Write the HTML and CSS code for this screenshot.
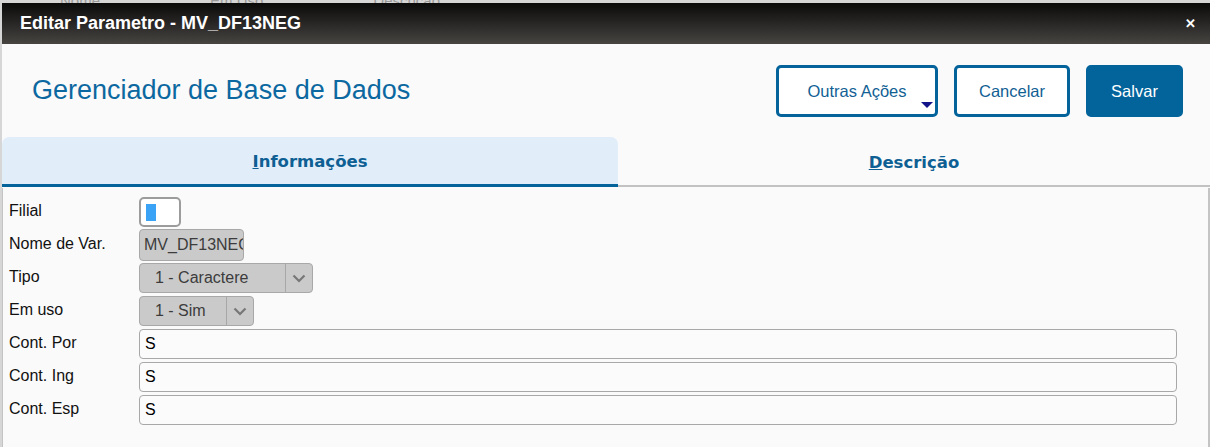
FILE: index.html
```html
<!DOCTYPE html>
<html lang="pt-BR">
<head>
  <meta charset="UTF-8" />
  <meta name="viewport" content="width=device-width, initial-scale=1" />
  <title>Editar Parametro - MV_DF13NEG</title>
  <link rel="stylesheet" href="styles.css">
</head>
<body>
  <div class="backdrop">
    <span>Nome</span><span>Em Uso</span><span>Descrição</span>
  </div>

  <div class="dialog">
    <header class="dialog-head">
      <h1>Editar Parametro - MV_DF13NEG</h1>
      <span class="close">&#x2715;</span>
    </header>

    <div class="toolbar">
      <h2>Gerenciador de Base de Dados</h2>
      <div class="actions">
        <button class="btn btn-more">Outras Ações<span class="caret"></span></button>
        <button class="btn btn-cancel">Cancelar</button>
        <button class="btn btn-primary">Salvar</button>
      </div>
    </div>

    <nav class="tabs">
      <div class="tab active"><u>I</u>nformações</div>
      <div class="tab"><u>D</u>escrição</div>
    </nav>

    <div class="panel">
      <div class="row">
        <label>Filial</label>
        <div class="field filial"><span class="cursor"></span></div>
      </div>
      <div class="row">
        <label>Nome de Var.</label>
        <div class="field disabled name">MV_DF13NEG</div>
      </div>
      <div class="row">
        <label>Tipo</label>
        <div class="field disabled select tipo">
          <span class="value">1 - Caractere</span>
          <span class="arrow"><svg width="14" height="9" viewBox="0 0 14 9"><path d="M1.5 1.5 L7 7 L12.5 1.5" fill="none" stroke="#777" stroke-width="2.2"/></svg></span>
        </div>
      </div>
      <div class="row">
        <label>Em uso</label>
        <div class="field disabled select uso">
          <span class="value">1 - Sim</span>
          <span class="arrow"><svg width="14" height="9" viewBox="0 0 14 9"><path d="M1.5 1.5 L7 7 L12.5 1.5" fill="none" stroke="#777" stroke-width="2.2"/></svg></span>
        </div>
      </div>
      <div class="row">
        <label>Cont. Por</label>
        <div class="field wide">S</div>
      </div>
      <div class="row">
        <label>Cont. Ing</label>
        <div class="field wide">S</div>
      </div>
      <div class="row">
        <label>Cont. Esp</label>
        <div class="field wide">S</div>
      </div>
    </div>
  </div>
</body>
</html>
```

FILE: styles.css
```css
html, body {
  margin: 0;
  padding: 0;
}

body {
  font-family: "Liberation Sans", Arial, sans-serif;
  background: #d6d6d6;
  height: 447px;
  overflow: hidden;
}

.backdrop {
  height: 3px;
  overflow: hidden;
  display: flex;
  gap: 110px;
  padding-left: 60px;
  font-size: 15px;
  line-height: 1px;
  color: #999;
}

.dialog {
  margin-left: 2px;
  background: #fafafa;
  height: 444px;
  display: flex;
  flex-direction: column;
}

.dialog-head {
  height: 41px;
  background: linear-gradient(#0a0a0a, #474441);
  display: flex;
  align-items: center;
  justify-content: space-between;
  padding: 0 14px 0 18px;
}

.dialog-head h1 {
  margin: 0;
  color: #fff;
  font-size: 18px;
  font-weight: bold;
}

.close {
  color: #fff;
  font-size: 13px;
  font-weight: bold;
}

.toolbar {
  display: flex;
  align-items: center;
  justify-content: space-between;
  padding: 21px 27px 20px 30px;
}

.toolbar h2 {
  margin: 0 0 2px;
  font-weight: normal;
  font-size: 27px;
  color: #0c68a0;
}

.actions {
  display: flex;
  gap: 16px;
}

.btn {
  height: 52px;
  padding: 0;
  font-family: "Liberation Sans", Arial, sans-serif;
  font-size: 16.5px;
  color: #125f94;
  background: #fff;
  border: 3px solid #04639a;
  border-radius: 5px;
  position: relative;
}

.btn-more {
  width: 162px;
}

.btn-cancel {
  width: 116px;
}

.caret {
  position: absolute;
  right: 2px;
  bottom: 6px;
  border-left: 6px solid transparent;
  border-right: 6px solid transparent;
  border-top: 6px solid #14148a;
}

.btn-primary {
  width: 97px;
  background: #03649c;
  border-color: #03649c;
  color: #fff;
}

.tabs {
  display: flex;
  height: 48px;
  border-bottom: 2px solid #c2c2c2;
}

.tab {
  flex: 0 0 616px;
  display: flex;
  align-items: center;
  justify-content: center;
  font-family: "DejaVu Sans", Verdana, sans-serif;
  font-weight: bold;
  font-size: 16.5px;
  color: #0e5f93;
  padding-top: 2px;
  box-sizing: border-box;
}

.tab + .tab {
  flex: 1;
}

.tab.active {
  background: #e1eefa;
  border-radius: 7px 7px 0 0;
  border-bottom: 3px solid #04639a;
  margin-bottom: -2px;
}

.panel {
  flex: 1;
  margin-top: 1px;
  border-left: 1px solid #c4c4c4;
  border-right: 2px solid #c4c4c4;
  padding: 9px 0 0 6px;
  display: flex;
  flex-direction: column;
  gap: 3px;
}

.row {
  display: flex;
  align-items: center;
  height: 30px;
}

.row label {
  width: 130px;
  font-size: 16px;
  color: #111;
  padding-bottom: 2px;
}

.field {
  height: 30px;
  box-sizing: border-box;
  border: 1px solid #a8a8a8;
  border-radius: 4px;
  background: #fbfbfb;
  font-size: 16px;
  color: #000;
  display: flex;
  align-items: center;
  padding-left: 5px;
  overflow: hidden;
  white-space: nowrap;
}

.filial {
  width: 42px;
  border: 2px solid #9c9c9c;
  border-radius: 5px;
  padding-left: 5px;
  background: #fff;
}

.cursor {
  width: 10px;
  height: 17px;
  background: #3aa3f5;
}

.disabled {
  background: #cacaca;
  color: #3c3c3c;
}

.name {
  width: 105px;
  height: 32px;
  padding-left: 4px;
}

.select {
  padding-left: 0;
}

.select .value {
  flex: 1;
  padding-left: 15px;
}

.select .arrow {
  width: 26px;
  height: 100%;
  border-left: 1px solid #a8a8a8;
  display: flex;
  align-items: center;
  justify-content: center;
}

.tipo {
  width: 174px;
}

.uso {
  width: 115px;
}

.wide {
  width: 1038px;
}
```
